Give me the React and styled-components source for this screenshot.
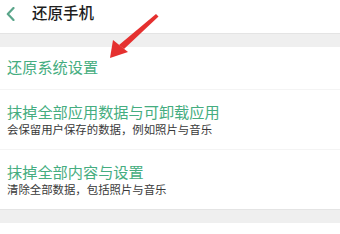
import React from 'react';
import styled, { createGlobalStyle } from 'styled-components';

const GlobalStyle = createGlobalStyle`
  html, body {
    margin: 0;
    padding: 0;
    background: #ffffff;
  }
  body {
    font-family: "Noto Sans CJK SC", "Noto Sans", sans-serif;
  }
`;

const items = [
  { title: '还原系统设置' },
  { title: '抹掉全部应用数据与可卸载应用', sub: '会保留用户保存的数据，例如照片与音乐' },
  { title: '抹掉全部内容与设置', sub: '清除全部数据，包括照片与音乐' },
];

function App() {
  return (
    <Page>
      <GlobalStyle />
      <Header>
        <Back>
          <svg width="9" height="14" viewBox="0 0 9 14">
            <path d="M7.5 1 L1.8 7 L7.5 13" fill="none" stroke="#5aa58a" strokeWidth="2.2" strokeLinecap="round" strokeLinejoin="round" />
          </svg>
        </Back>
        <Title>还原手机</Title>
      </Header>
      <Band />
      <List>
        {items.map((it, i) => (
          <Row key={i} $first={i === 0} $last={i === items.length - 1}>
            <ItemTitle>{it.title}</ItemTitle>
            {it.sub && <ItemSub>{it.sub}</ItemSub>}
          </Row>
        ))}
      </List>
      <Band />
      <Arrow width="65" height="60" viewBox="0 0 65 60">
        <polygon points="56,9 58.5,11.5 24,44 19,40" fill="#e5302f" />
        <polygon points="10,53 13,35 28,47" fill="#e5302f" />
      </Arrow>
    </Page>
  );
}
export default App;

const Page = styled.div`
  position: relative;
  width: 340px;
  height: 234px;
  overflow: hidden;
  background: #fff;
`;

const Header = styled.div`
  height: 33px;
  display: flex;
  align-items: center;
  padding-left: 6px;
  box-sizing: border-box;
  padding-bottom: 9px;
`;

const Back = styled.div`
  width: 26px;
  display: flex;
  align-items: center;
  padding-top: 4px;
`;

const Title = styled.div`
  font-size: 15.5px;
  font-weight: 500;
  color: #1e1e1e;
  line-height: 20px;
`;

const Band = styled.div`
  height: 14px;
  background: #efefef;
  border-top: 1px solid #e4e4e4;
  box-sizing: border-box;
`;

const List = styled.div`
  display: flex;
  flex-direction: column;
`;

const Row = styled.div`
  padding: ${p => (p.$first ? '10px 7px 13px' : '12px 7px 12px')};
  border-bottom: ${p => (p.$last ? 'none' : '1px solid #f4f4f4')};
  display: flex;
  flex-direction: column;
`;

const ItemTitle = styled.div`
  font-size: 15.2px;
  line-height: 19px;
  color: #45ad80;
`;

const ItemSub = styled.div`
  font-size: 11.4px;
  line-height: 16px;
  color: #3a3a3a;
`;

const Arrow = styled.svg`
  position: absolute;
  left: 100px;
  top: 5px;
`;
